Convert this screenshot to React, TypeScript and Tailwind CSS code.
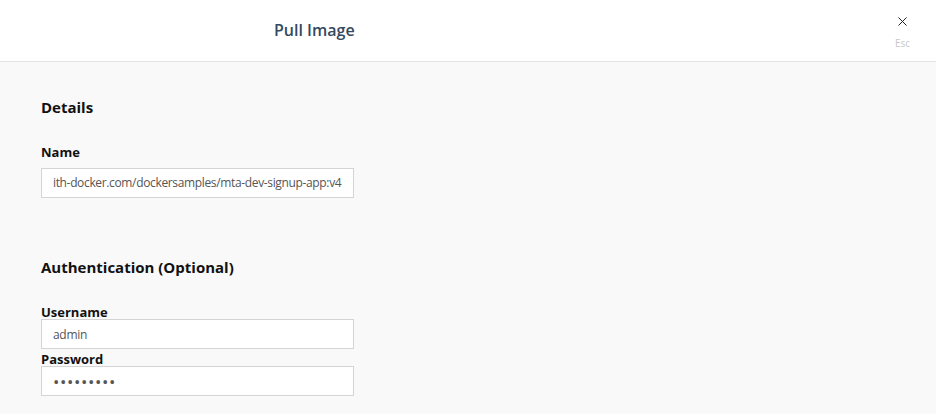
import { X } from "lucide-react";

const Field = ({ label, value, wide = false }: { label: string; value: string; wide?: boolean }) => (
  <div className="flex flex-col">
    <label className="pt-[4px] text-[13px] font-bold text-[#111] leading-[13px]">{label}</label>
    <input
      readOnly
      value={value}
      className={`w-[313px] h-[30px] border border-[#d4d4d4] bg-white px-[11px] text-[#555] outline-none ${
        wide ? "text-[17px] tracking-[0.6px] text-[#444]" : "text-[12px] tracking-[-0.3px]"
      }`}
    />
  </div>
);

export default function App() {
  return (
    <div className="w-[936px] h-[414px] bg-[#f9f9f9] font-['Open_Sans',sans-serif] overflow-hidden">
      <div className="h-[62px] bg-white border-b border-[#e3e3e3] flex items-start justify-between">
        <h1 className="pl-[274px] pt-[18px] text-[16px] font-semibold text-[#34495e]">Pull Image</h1>
        <div className="flex flex-col items-center pr-[26px] pt-[14px]">
          <X className="w-[15px] h-[15px] text-[#222]" strokeWidth={1.6} />
          <span className="text-[10px] text-[#c8c8c8] leading-[12px] mt-[8px]">Esc</span>
        </div>
      </div>
      <div className="px-[41px] pt-[34px]">
        <h2 className="text-[15px] font-bold text-[#111]">Details</h2>
        <div className="mt-[25px] flex flex-col">
          <label className="text-[13px] font-bold text-[#111] leading-[17px]">Name</label>
          <input
            readOnly
            value="ith-docker.com/dockersamples/mta-dev-signup-app:v4"
            className="mt-[7px] w-[313px] h-[30px] border border-[#d4d4d4] bg-white pl-[11px] pr-[2px] text-[12px] tracking-[-0.35px] text-[#555] outline-none"
          />
        </div>
        <h2 className="mt-[58px] text-[15px] font-bold text-[#111]">Authentication (Optional)</h2>
        <div className="mt-[24px] flex flex-col">
          <Field label="Username" value="admin" />
          <Field label="Password" value="•••••••••" wide />
        </div>
      </div>
    </div>
  );
}
